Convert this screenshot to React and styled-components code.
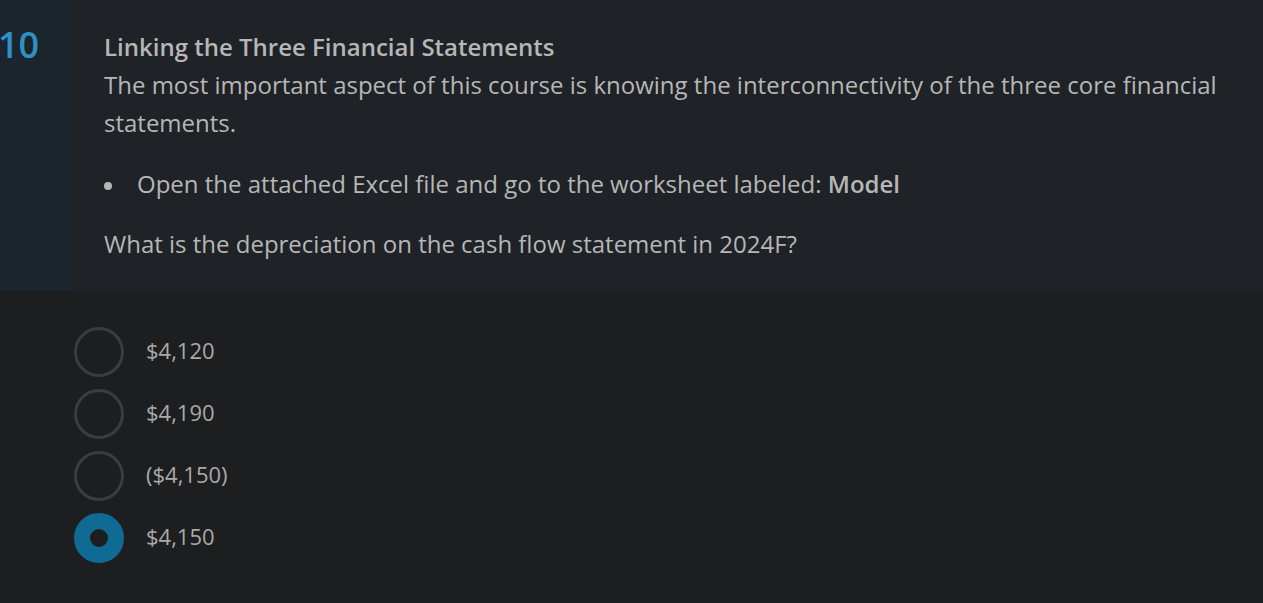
import React from "react";
import styled, { createGlobalStyle } from "styled-components";

const GlobalStyle = createGlobalStyle`
  html, body {
    margin: 0;
    padding: 0;
    background: #1d1e20;
    font-family: "Open Sans", "Noto Sans", sans-serif;
  }
`;

const options = ["$4,120", "$4,190", "($4,150)", "$4,150"];

export default function App() {
  const [selected, setSelected] = React.useState(3);
  return (
    <Page>
      <GlobalStyle />
      <QuestionBlock>
        <NumberColumn>
          <QuestionNumber>10</QuestionNumber>
        </NumberColumn>
        <Content>
          <Title>Linking the Three Financial Statements</Title>
          <Paragraph>
            The most important aspect of this course is knowing the
            interconnectivity of the three core financial statements.
          </Paragraph>
          <BulletList>
            <li>
              Open the attached Excel file and go to the worksheet labeled:{" "}
              <strong>Model</strong>
            </li>
          </BulletList>
          <Question>
            What is the depreciation on the cash flow statement in 2024F?
          </Question>
        </Content>
      </QuestionBlock>
      <Options>
        {options.map((label, i) => (
          <Option key={label} onClick={() => setSelected(i)}>
            <Radio $checked={selected === i} />
            <OptionLabel>{label}</OptionLabel>
          </Option>
        ))}
      </Options>
    </Page>
  );
}

const Page = styled.div`
  width: 100%;
  min-height: 603px;
  background: #1d1e20;
`;

const QuestionBlock = styled.div`
  display: flex;
  height: 291px;
  background: #1f2327;
`;

const NumberColumn = styled.div`
  width: 72px;
  flex-shrink: 0;
  background: #1b252d;
`;

const QuestionNumber = styled.div`
  color: #2f90c3;
  font-size: 36px;
  font-weight: 600;
  line-height: 1;
  margin-top: 27px;
  margin-left: -2px;
`;

const Content = styled.div`
  flex: 1;
  padding: 32px 30px 0 32px;
  color: #b6b6b6;
  font-size: 24px;
  line-height: 38px;
`;

const Title = styled.h2`
  margin: 0;
  font-size: 24px;
  font-weight: 600;
  line-height: 30px;
  color: #b6b6b6;
`;

const Paragraph = styled.p`
  margin: 4px 0 0;
`;

const BulletList = styled.ul`
  margin: 23px 0 0;
  padding: 0;
  list-style: none;

  li {
    position: relative;
    padding-left: 33px;
  }

  li::before {
    content: "";
    position: absolute;
    left: 0;
    top: 17px;
    width: 8px;
    height: 8px;
    border-radius: 50%;
    background: #b6b6b6;
  }

  strong {
    font-weight: 600;
  }
`;

const Question = styled.p`
  margin: 22px 0 0;
`;

const Options = styled.div`
  display: flex;
  flex-direction: column;
  gap: 12px;
  padding: 36px 0 0 74px;
`;

const Option = styled.label`
  display: flex;
  align-items: center;
  gap: 22px;
  cursor: pointer;
`;

const Radio = styled.span`
  width: 50px;
  height: 50px;
  box-sizing: border-box;
  border-radius: 50%;
  border: ${(p) => (p.$checked ? "16px solid #0f6b94" : "3px solid #3b3c3e")};
  background: ${(p) => (p.$checked ? "#1d1e20" : "transparent")};
`;

const OptionLabel = styled.span`
  color: #a9a9a9;
  font-size: 22px;
  padding-bottom: 4px;
`;
